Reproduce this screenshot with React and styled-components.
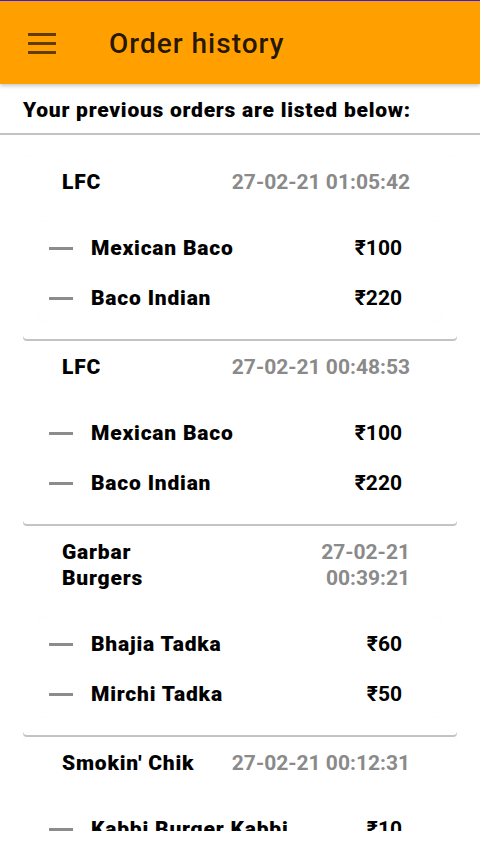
import React from "react";
import styled, { createGlobalStyle } from "styled-components";

const Global = createGlobalStyle`
  html, body { margin: 0; padding: 0; background: #fff; }
  body { font-family: Roboto, "Noto Sans", Arial, sans-serif; }
  * { box-sizing: border-box; }
`;

const Screen = styled.div`
  width: 480px;
  height: 844px;
  display: flex;
  flex-direction: column;
  background: #fff;
  overflow: hidden;
`;

const TopEdge = styled.div`
  height: 1px;
  background: #3b1ef5;
  flex: none;
`;

const AppBar = styled.header`
  height: 83px;
  flex: none;
  background: #ffa000;
  display: flex;
  align-items: center;
  padding-left: 28px;
  gap: 53px;
  box-shadow: 0 2px 4px rgba(0, 0, 0, 0.22);
  position: relative;
  z-index: 2;
`;

const MenuButton = styled.div`
  width: 28px;
  display: flex;
  flex-direction: column;
  gap: 6px;
  margin-top: 1px;
`;

const MenuLine = styled.span`
  display: block;
  height: 3px;
  background: rgba(0, 0, 0, 0.62);
`;

const Title = styled.h1`
  margin: 0;
  margin-top: 2px;
  font-size: 28px;
  font-weight: 500;
  color: rgba(0, 0, 0, 0.87);
  letter-spacing: 1px;
`;

const Intro = styled.div`
  flex: none;
  padding: 14px 23px 11px;
  font-size: 21px;
  line-height: 24px;
  font-weight: 900;
  letter-spacing: 0.75px;
  color: #000;
  border-bottom: 2px solid #c2c2c2;
`;

const List = styled.div`
  flex: 1;
  overflow: hidden;
  padding-top: 21px;
  margin-bottom: 13px;
`;

const Card = styled.section`
  margin: 0 23px 2px;
  padding: 13px 16px 18px;
  border-radius: 4px;
  background: #fff;
  box-shadow: 0 2px 0 #c4c4c4, 0 0 1px rgba(0, 0, 0, 0.06);
`;

const CardHead = styled.div`
  display: flex;
  justify-content: space-between;
  align-items: flex-start;
  gap: 30px;
  padding: 0 31px 0 23px;
  margin-bottom: 26px;
  font-size: 21px;
  line-height: 26px;
  font-weight: 700;
`;

const Shop = styled.div`
  color: #000;
  font-weight: 900;
  letter-spacing: 0.8px;
`;

const Stamp = styled.div`
  color: #8a8a8a;
  text-align: right;
`;

const Items = styled.div`
  border-radius: 4px;
  background: #fff;
  box-shadow: 0 0 1px rgba(0, 0, 0, 0.07);
  padding: 15px 39px 11px 10px;
  display: flex;
  flex-direction: column;
  gap: 26px;
`;

const ItemRow = styled.div`
  display: flex;
  align-items: center;
  height: 24px;
  font-size: 21px;
  font-weight: 700;
  color: #000;
`;

const Dash = styled.span`
  width: 24px;
  height: 3px;
  background: #8c8c8c;
  flex: none;
  margin-right: ${(p) => p.$gap}px;
`;

const ItemName = styled.span`
  flex: 1;
  white-space: nowrap;
  font-weight: 900;
  letter-spacing: 0.8px;
`;

const Price = styled.span`
  white-space: nowrap;
`;

const orders = [
  {
    shop: "LFC",
    time: "27-02-21 01:05:42",
    items: [
      ["Mexican Baco", "₹100"],
      ["Baco Indian", "₹220"],
    ],
  },
  {
    shop: "LFC",
    time: "27-02-21 00:48:53",
    items: [
      ["Mexican Baco", "₹100"],
      ["Baco Indian", "₹220"],
    ],
  },
  {
    shop: "Garbar Burgers",
    time: "27-02-21 00:39:21",
    items: [
      ["Bhajia Tadka", "₹60"],
      ["Mirchi Tadka", "₹50"],
    ],
  },
  {
    shop: "Smokin' Chik",
    time: "27-02-21 00:12:31",
    items: [["Kabbi Burger Kabbi", "₹10"]],
  },
];

export default function App() {
  return (
    <Screen>
      <Global />
      <TopEdge />
      <AppBar>
        <MenuButton>
          <MenuLine />
          <MenuLine />
          <MenuLine />
        </MenuButton>
        <Title>Order history</Title>
      </AppBar>
      <Intro>Your previous orders are listed below:</Intro>
      <List>
        {orders.map((o, i) => (
          <Card key={i}>
            <CardHead>
              <Shop>{o.shop}</Shop>
              <Stamp>{o.time}</Stamp>
            </CardHead>
            <Items>
              {o.items.map(([name, price], j) => (
                <ItemRow key={j}>
                  <Dash $gap={18} />
                  <ItemName>{name}</ItemName>
                  <Price>{price}</Price>
                </ItemRow>
              ))}
            </Items>
          </Card>
        ))}
      </List>
    </Screen>
  );
}
